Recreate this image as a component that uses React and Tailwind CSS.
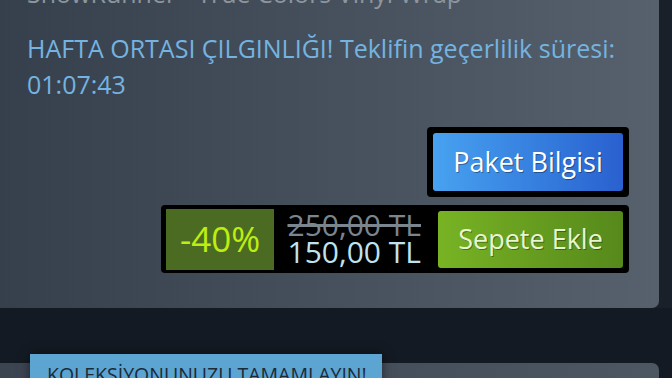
import React from 'react';

const font = { fontFamily: '"Open Sans", "Noto Sans", sans-serif' };

const PurchaseCard = () => (
  <div className="pr-[13px] bg-[#19202a]">
    <div className="-mt-[22px] rounded-br-[7px] bg-gradient-to-r from-[#36404c] to-[#56616d] pl-[27px] pr-[30px] pb-[35px] pt-0">
      <div className="text-[25px] leading-[30px] text-[#8d969f] whitespace-nowrap">
        ShowRunner - True Colors Vinyl Wrap
      </div>
      <div className="mt-[22px] text-[25px] leading-[36px] text-[#75b3e0] whitespace-nowrap">
        HAFTA ORTASI ÇILGINLIĞI! Teklifin geçerlilik süresi:
        <br />
        01:07:43
      </div>

      <div className="mt-[25px] flex flex-col items-end gap-[8px]">
        <div className="rounded-[4px] bg-black p-[6px]">
          <button className="flex h-[58px] w-[190px] items-center justify-center rounded-[3px] bg-gradient-to-r from-[#48a2f0] to-[#2a60cf] text-[27px] text-white [text-shadow:1px_1px_0_rgba(0,0,0,0.35)]">
            Paket Bilgisi
          </button>
        </div>

        <div className="flex h-[68px] w-[468px] items-center rounded-[4px] bg-black pl-[5px] pr-[6px]">
          <div className="flex h-[61px] w-[108px] items-center justify-center bg-[#4c6b22] text-[35px] text-[#beee11]">
            -40%
          </div>
          <div className="flex flex-1 flex-col items-end pr-[17px]">
            <span className="text-[30px] leading-[26px] text-[#7b858d] line-through decoration-[#7b858d]">250,00 TL</span>
            <span className="text-[30px] leading-[28px] text-[#bfe2f0]">150,00 TL</span>
          </div>
          <button className="flex h-[57px] w-[185px] items-center justify-center rounded-[3px] bg-gradient-to-r from-[#78b324] to-[#56891b] text-[27px] text-[#e6f6cf] [text-shadow:1px_1px_0_rgba(0,0,0,0.35)]">
            Sepete Ekle
          </button>
        </div>
      </div>
    </div>
  </div>
);

const NextSection = () => (
  <div className="relative pr-[13px] pt-[55px]">
    <div className="h-[40px] rounded-tr-[7px] bg-gradient-to-r from-[#3b4551] to-[#4c5763]" />
    <div className="absolute left-[30px] top-[46px] h-[40px] w-[352px] bg-[#5ca4d2] pl-[17px] pt-[9px] text-[19.5px] leading-[24px] text-[#1b2a38] shadow-[0_0_10px_rgba(0,0,0,0.5)] whitespace-nowrap">
      KOLEKSİYONUNUZU TAMAMLAYIN!
    </div>
  </div>
);

export default function App() {
  return (
    <div style={font} className="h-[378px] w-[672px] overflow-hidden bg-[#141a23]">
      <PurchaseCard />
      <NextSection />
    </div>
  );
}
